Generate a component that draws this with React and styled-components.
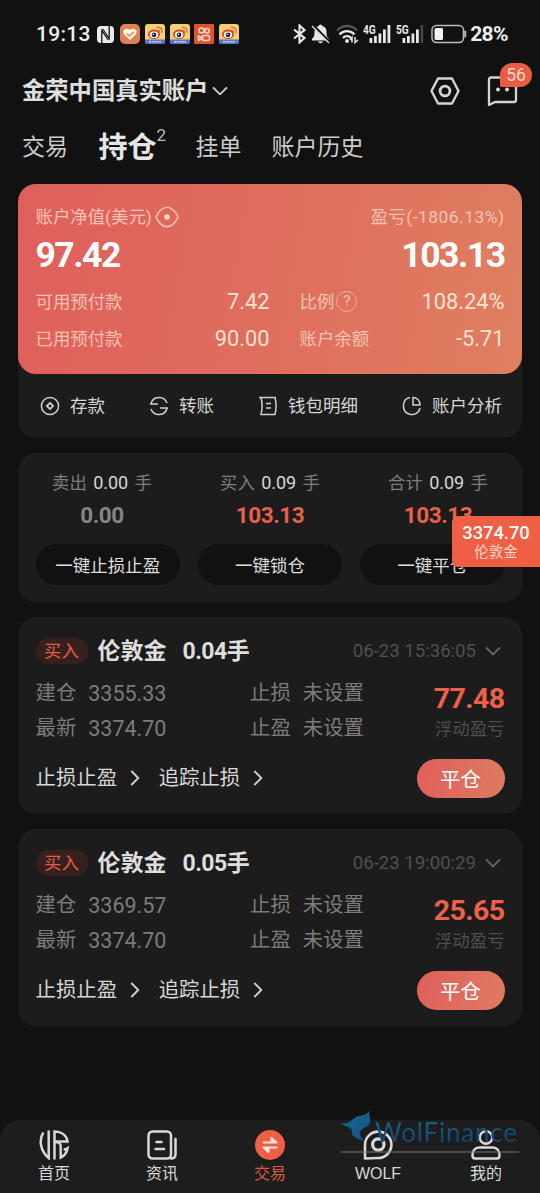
import React from "react";
import styled, { createGlobalStyle } from "styled-components";

const GlobalStyle = createGlobalStyle`
  body {
    margin: 0;
    background: #111111;
  }

  * {
    box-sizing: border-box;
  }

  svg {
    display: block;
    flex-shrink: 0;
  }
`;

const Screen = styled.div`
  position: relative;
  display: flex;
  flex-direction: column;
  width: 540px;
  height: 1193px;
  overflow: hidden;
  background: #111111;
  color: #dedede;
  font-family: Roboto, "Noto Sans CJK SC", sans-serif;
  white-space: nowrap;
`;

const StatusBar = styled.div`
  display: flex;
  align-items: center;
  height: 68px;
  padding: 0 32px 0 36px;
`;

const StatusText = styled.span`
  font-size: 21px;
  font-weight: ${(props) => props.$weight || 500};
  line-height: 24px;
  letter-spacing: ${(props) => props.$spacing || "0"};
  color: #eeeeee;
`;

const AppIcons = styled.div`
  display: flex;
  gap: 4.7px;
  margin-left: 6px;
`;

const SystemIcons = styled.div`
  display: flex;
  align-items: center;
  margin-left: auto;
`;

const Gap = styled.span`
  width: ${(props) => props.$w}px;
`;

const Header = styled.header`
  display: flex;
  align-items: center;
  height: 45px;
  padding: 0 22px;
`;

const AccountName = styled.h1`
  margin: 0 4px 0 0;
  font-size: 23.3px;
  font-weight: 700;
  line-height: 30px;
`;

const HeaderActions = styled.div`
  display: flex;
  align-items: center;
  gap: 27px;
  margin-left: auto;
`;

const MessageButton = styled.div`
  position: relative;
`;

const MessageBadge = styled.span`
  position: absolute;
  top: -13px;
  left: 13px;
  width: 32px;
  height: 24px;
  border-radius: 12px 12px 12px 2px;
  background: #ec5b42;
  color: #f7ddd4;
  font-size: 17.5px;
  line-height: 25px;
  text-align: center;
`;

const Tabs = styled.nav`
  display: flex;
  align-items: center;
  height: 71px;
  padding: 0 22px 1px;
`;

const Tab = styled.span`
  display: flex;
  margin-right: ${(props) => props.$gap}px;
  font-size: ${(props) => (props.$active ? "29px" : "23px")};
  font-weight: ${(props) => (props.$active ? 700 : 400)};
  line-height: 36px;
  color: ${(props) => (props.$active ? "#e6e6e6" : "#cccccc")};
`;

const TabCount = styled.sup`
  margin: -13px 0 0 0;
  font-size: 17px;
  font-weight: 400;
  line-height: 36px;
  color: #bbbbbb;
`;

const Content = styled.main`
  display: flex;
  flex-direction: column;
  gap: 15px;
  padding: 0 18px;
`;

const Card = styled.section`
  border-radius: 18px;
  background: #1c1c1c;
`;

const Balance = styled.div`
  height: 190px;
  padding: 21px 17.5px 0;
  border-radius: 18px;
  background: linear-gradient(100deg, #df5f5c 0%, #df6c5d 45%, #df7f60 100%);
`;

const Between = styled.div`
  display: flex;
  align-items: center;
  justify-content: space-between;
`;

const BalanceLabel = styled.span`
  display: flex;
  align-items: center;
  gap: 3px;
  font-size: 17.4px;
  line-height: 24px;
  letter-spacing: ${(props) => props.$spacing || "0"};
  color: #f5c3b4;
`;

const Total = styled.span`
  font-size: 35.5px;
  font-weight: 700;
  line-height: 52px;
  letter-spacing: -1.5px;
  color: #ffffff;
`;

const BalanceGrid = styled.div`
  display: grid;
  grid-template-columns: 234px 205px;
  column-gap: 30px;
  row-gap: 13px;
  margin-top: 8.5px;
`;

const BalanceValue = styled.span`
  font-size: 21.8px;
  line-height: 24px;
  color: #fbe3d4;
`;

const Actions = styled.div`
  display: flex;
  gap: 44px;
  height: 64px;
  padding: 0 0 0 22px;
  align-items: center;
`;

const Action = styled.span`
  display: flex;
  align-items: center;
  gap: 10px;
  font-size: 17.5px;
  line-height: 24px;
  color: #d5d5d5;
`;

const Summary = styled.div`
  height: 149px;
  padding-top: 17px;
`;

const SummaryFigures = styled.div`
  display: grid;
  grid-template-columns: repeat(3, 1fr);
  height: 74px;
`;

const SummaryColumn = styled.div`
  display: flex;
  flex-direction: column;
  align-items: center;
`;

const SummaryLots = styled.span`
  font-size: 17.4px;
  line-height: 26px;
  color: #7d7d7d;

  b {
    margin: 0 2px;
    font-size: 18px;
    font-weight: 400;
    color: #d6d6d6;
  }
`;

const SummaryProfit = styled.span`
  font-size: 22.5px;
  font-weight: 700;
  line-height: 39px;
  letter-spacing: -0.4px;
  color: ${(props) => (props.$flat ? "#858585" : "#e8604a")};
`;

const SummaryButtons = styled.div`
  display: grid;
  grid-template-columns: repeat(3, 1fr);
  column-gap: 17.5px;
  padding: 0 17.5px;
`;

const SummaryButton = styled.button`
  height: 41px;
  padding: 0 0 1px;
  border: none;
  border-radius: 21px;
  background: #111111;
  color: #dedede;
  font-family: inherit;
  font-size: 17.5px;
`;

const Position = styled(Card)`
  height: 197px;
  padding: 20.5px 17.5px 0;
`;

const PositionHead = styled.div`
  display: flex;
  align-items: center;
  height: 27px;
`;

const SideTag = styled.span`
  width: 52px;
  height: 26px;
  margin-right: 10px;
  border-radius: 13px;
  background: #36201d;
  color: #e75e4a;
  font-size: 17.4px;
  line-height: 26px;
  text-align: center;
`;

const PositionName = styled.span`
  margin-right: 16px;
  font-size: 23px;
  font-weight: 700;
  line-height: 27px;
  letter-spacing: ${(props) => props.$spacing || "0"};
`;

const PositionTime = styled.span`
  display: flex;
  align-items: center;
  gap: 9px;
  margin-left: auto;
  padding-right: 3.5px;
  font-size: 18.6px;
  line-height: 24px;
  color: #4f4f4f;
`;

const PositionBody = styled.div`
  display: grid;
  grid-template-columns: 214.5px 1fr auto;
  height: 71px;
  margin-top: 11px;
`;

const Field = styled.div`
  display: flex;
  gap: 12px;
  font-size: 20.4px;
  line-height: 35.5px;
  color: #7b7b7b;
`;

const FieldNumber = styled.span`
  font-size: 21.5px;
`;

const Floating = styled.div`
  display: flex;
  flex-direction: column;
  align-items: flex-end;
`;

const FloatingValue = styled.span`
  font-size: 28.5px;
  font-weight: 700;
  line-height: 45px;
  letter-spacing: -0.6px;
  color: #ee6049;
`;

const FloatingLabel = styled.span`
  font-size: 17.4px;
  line-height: 17px;
  color: #4f4f4f;
`;

const PositionFoot = styled.div`
  display: flex;
  align-items: center;
  height: 39px;
  margin-top: 12px;
`;

const FootLink = styled.span`
  display: flex;
  align-items: center;
  gap: 13px;
  margin-right: 19px;
  font-size: 20.4px;
  line-height: 28px;
  color: #d6d6d6;
`;

const CloseButton = styled.button`
  width: 88px;
  height: 39px;
  margin-left: auto;
  padding: 0 0 1px;
  border: none;
  border-radius: 20px;
  background: linear-gradient(100deg, #df5f5c, #df7b60);
  color: #ffffff;
  font-family: inherit;
  font-size: 20.4px;
`;

const PriceTag = styled.div`
  position: absolute;
  top: 515.5px;
  right: 0;
  width: 88px;
  height: 51px;
  padding-top: 5px;
  border-radius: 6px 0 0 6px;
  background: #ee5f46;
  color: #ffffff;
  font-size: 18.3px;
  font-weight: 500;
  line-height: 23px;
  text-align: center;
`;

const PriceTagName = styled.div`
  font-size: 14.5px;
  font-weight: 400;
  line-height: 18px;
  color: #fbd3c8;
`;

const BottomNav = styled.nav`
  display: grid;
  grid-template-columns: repeat(5, 1fr);
  height: 73.5px;
  margin-top: auto;
  padding-top: 10px;
  border-radius: 20px 20px 0 0;
  background: #1d1d1d;
`;

const NavItem = styled.div`
  display: flex;
  flex-direction: column;
  align-items: center;
  gap: 4.5px;
  font-family: "Liberation Sans", "Noto Sans CJK SC", sans-serif;
  font-size: 16px;
  line-height: 20px;
  color: ${(props) => (props.$active ? "#d95a46" : "#d8d8d8")};
`;

const Watermark = styled.div`
  position: absolute;
  left: 341px;
  top: 1110px;
  display: flex;
  width: 178px;
  height: 43px;
  border-bottom: 2px solid rgba(120, 120, 120, 0.5);
`;

const WatermarkText = styled.span`
  margin-left: 1px;
  font-family: Lato, sans-serif;
  font-size: 26px;
  line-height: 45px;
  letter-spacing: 0.8px;
  background: linear-gradient(#145f80 30%, #17406e 80%);
  background-clip: text;
  color: transparent;
`;

const Chevron = ({ size = 16, color = "#d0d0d0", right }) => (
  <svg width={right ? size * 0.6 : size} height={right ? size : size * 0.6} viewBox={right ? "0 0 9 16" : "0 0 16 9"} fill="none" stroke={color} strokeWidth="1.9">
    <path d={right ? "M1 1l7 7-7 7" : "M1 1l7 7 7-7"} />
  </svg>
);

const NfcIcon = () => (
  <svg width="17" height="19" viewBox="0 0 17 19">
    <rect y="1" width="17" height="17" rx="4" fill="#e9e9e9" />
    <path d="M4.800 19V5.500l6.500 9.500M12.200 0v13.500L5.700 4" fill="none" stroke="#111" strokeWidth="1.300" />
  </svg>
);

const HealthIcon = () => (
  <svg width="20" height="20" viewBox="0 0 20 20">
    <rect width="20" height="20" rx="5" fill="#dc8256" />
    <path d="M10 16L4.2 10.5C1.5 7 5.500 2.500 10 6c4.500-3.500 8.500 1 5.800 4.500z" fill="#fff4e8" />
    <path d="M7 9.500l2.700 2.500L13.500 8" fill="none" stroke="#dc8256" strokeWidth="1.400" />
  </svg>
);

const WeiboIcon = () => (
  <svg width="20" height="20" viewBox="0 0 20 20">
    <rect width="20" height="20" rx="3" fill="#f4cf73" />
    <path d="M0 15.500h20V17a3 3 0 0 1-3 3H3a3 3 0 0 1-3-3z" fill="#5b72c9" />
    <path d="M4 17.800h12" stroke="#c9d2f1" strokeWidth="1.500" strokeDasharray="2 .6" />
    <ellipse cx="9" cy="10.300" rx="6" ry="4.800" fill="#cf4a32" />
    <ellipse cx="9" cy="10.800" rx="4.200" ry="3.200" fill="#fff" />
    <circle cx="9" cy="10.800" r="2.400" fill="#222" />
    <circle cx="8.300" cy="10.300" r=".8" fill="#fff" />
    <path d="M12 6.500c2-.6 3 .8 2.500 2.500M12 3.500c4-.8 6 2 5 5.500" fill="none" stroke="#d8663c" strokeWidth="1.300" />
  </svg>
);

const KuaishouIcon = () => (
  <svg width="20" height="20" viewBox="0 0 20 20">
    <rect width="20" height="20" rx="1" fill="#e3522f" />
    <g fill="none" stroke="#fbd9cb" strokeWidth="1.600">
      <circle cx="7.500" cy="6.500" r="2.500" />
      <circle cx="13" cy="6.700" r="2.200" />
      <rect x="8.500" y="11.500" width="7" height="5" rx="1.500" />
      <path d="M4.500 12l3 1.200v1.800l-3 1.200z" />
    </g>
  </svg>
);

const BluetoothIcon = () => (
  <svg width="13" height="20" viewBox="0 0 13 20" fill="none" stroke="#e8e8e8" strokeWidth="2.100">
    <path d="M1 5.500l10.500 8.500-5 4.500V1.500l5 4.500L1 14.500" />
  </svg>
);

const BellOffIcon = () => (
  <svg width="19" height="20" viewBox="0 0 19 20">
    <path d="M9.500 .5c1 0 1.700.8 1.700 1.500 3 .8 4.300 2.500 4.300 5.500 0 4.500.5 5.500 2.500 7.500v1.500H1V15c2-2 2.500-3 2.500-7.500C3.500 4.500 5 2.800 7.800 2c0-.7.700-1.500 1.700-1.500zM7 17.500h5c-.5 2.300-4.500 2.300-5 0z" fill="#e8e8e8" />
    <path d="M2 1.500L18.500 18" stroke="#111" strokeWidth="3" />
    <path d="M1 2l17 17" stroke="#e8e8e8" strokeWidth="1.300" />
  </svg>
);

const WifiIcon = () => (
  <svg width="23" height="20" viewBox="0 0 23 20" fill="none" strokeWidth="2.300">
    <path d="M1 6.500C6.500.5 15.500.5 21 6.500" stroke="#555" />
    <path d="M3.500 10.500c4-4.500 11-4.500 15 0M7 14c2-2.500 6-2.500 8 0" stroke="#e8e8e8" />
    <circle cx="11" cy="17" r="1.900" fill="#e8e8e8" />
    <path d="M16 18.500v-5l-2 2.500M19 13v5.500l3-2.500" stroke="#e8e8e8" strokeWidth="1.500" />
  </svg>
);

const SignalIcon = ({ label, weak }) => (
  <svg width="30" height="28" viewBox="-1 -4 30 28">
    {[14, 12, 9.5, 5.5, 1].map((y, i) => (
      <rect key={y} x={6.5 + i * 4.5} y={y} width="2.800" height={19 - y} fill={weak && i === 4 ? "#444" : "#e8e8e8"} />
    ))}
    <text x="0" y="10" fill="#e8e8e8" fontSize="12" fontWeight="700" textLength="12.800" lengthAdjust="spacingAndGlyphs">{label}</text>
  </svg>
);

const BatteryIcon = () => (
  <svg width="36" height="20" viewBox="0 0 36 20">
    <rect x="1" y="1.500" width="31.500" height="17" rx="4.500" fill="none" stroke="#bcbcbc" strokeWidth="1.500" />
    <rect x="3.500" y="4" width="8.500" height="12" rx="1.500" fill="#f2f2f2" />
    <path d="M34.200 7.500v5" stroke="#bcbcbc" strokeWidth="2" strokeLinecap="round" />
  </svg>
);

const SettingsIcon = () => (
  <svg width="30" height="30" viewBox="0 0 30 30" fill="none" stroke="#d4d4d4" strokeWidth="2.400" strokeLinejoin="round">
    <path d="M8 2.500h14L28.500 15 22 27.500H8L1.500 15z" />
    <circle cx="15" cy="15" r="4.900" strokeWidth="2.800" />
  </svg>
);

const MessageIcon = () => (
  <svg width="31" height="30" viewBox="0 0 31 30" fill="none" stroke="#d4d4d4" strokeWidth="2.300" strokeLinejoin="round">
    <path d="M4 1.500h23a2 2 0 0 1 2 2V24a2 2 0 0 1-2 2H8l-6 3V3.500a2 2 0 0 1 2-2z" />
    <g fill="#d4d4d4" stroke="none">
      <circle cx="11" cy="13.500" r="2" />
      <circle cx="20" cy="13.500" r="2" />
    </g>
  </svg>
);

const EyeIcon = () => (
  <svg width="24" height="22" viewBox="0 0 24 22" fill="none" stroke="#f4bfb0" strokeWidth="1.600">
    <path d="M1 11C2.500 7 7 1.200 12 1.200S21.500 7 23 11C21.500 15 17 20.800 12 20.800S2.500 15 1 11z" strokeLinejoin="round" />
    <circle cx="12" cy="11" r="2.800" fill="#f8d9cf" stroke="none" />
  </svg>
);

const HelpMark = styled.span`
  width: 21px;
  height: 21px;
  margin-left: -1px;
  border: 1.5px solid #f0b29b;
  border-radius: 50%;
  font-size: 15.5px;
  line-height: 19px;
  text-align: center;
`;

const lineIcon = {
  width: 20,
  height: 20,
  viewBox: "0 0 20 20",
  fill: "none",
  stroke: "#cfcfcf",
  strokeWidth: 1.5,
};

const DepositIcon = () => (
  <svg {...lineIcon}>
    <circle cx="10" cy="10" r="8.600" />
    <path d="M10 6.900l3.100 3.100-3.100 3.100L6.900 10z" strokeWidth="1.800" />
  </svg>
);

const TransferIcon = () => (
  <svg {...lineIcon}>
    <path d="M1 8h8M2 8C3.500-.2 15-1 18 7M19 12h-8M18 12c-1.500 8.200-13 9-16 1" />
  </svg>
);

const WalletIcon = () => (
  <svg {...lineIcon}>
    <path d="M1 1.500h17M3 1.500c1.500 6 1.500 11 0 17h14c1.500-6 1.500-11 0-17M8 7.500h5M8 12H13" />
  </svg>
);

const PieIcon = () => (
  <svg {...lineIcon}>
    <path d="M8 1.500C-.5 3-.8 16 7.500 18.300c5 1.200 9.500-1.800 10.700-6.300M11 1.500V9h7c0-4.500-3-7.500-7-7.500z" />
  </svg>
);

const HomeIcon = () => (
  <svg width="30" height="30" viewBox="0 0 30 30" fill="none" stroke="#d8d8d8" strokeWidth="2.500">
    <path d="M4.300 2.500C-.5 10 1.500 21 9.700 28V.5M15.500 29.500V1.600C22 1.600 27.500 5 28.500 11.500H16" />
    <path d="M16 12c5 0 5.700 2 5.700 5v10.500C25 26 27.800 22.500 28.600 18.200c-1.500 1-2.600 1.300-4 1.300" />
  </svg>
);

const NewsIcon = () => (
  <svg width="30" height="30" viewBox="0 0 30 30" fill="none" stroke="#d8d8d8" strokeWidth="2.500">
    <rect x="1.500" y="1.500" width="22.500" height="27" rx="4" />
    <path d="M24 28.500c3 0 4.500-1.500 4.500-4.500V9M9.500 12h5M8.500 19h8.500" strokeLinecap="round" />
  </svg>
);

const TradeIcon = () => (
  <svg width="30" height="30" viewBox="0 0 30 30">
    <circle cx="15" cy="15" r="15" fill="#ee5f46" />
    <path d="M8.500 12.500h13l-5-4.500v4M21.500 17.500h-13l5 4.500v-4" fill="#fbe3dc" stroke="#fbe3dc" strokeWidth="2" strokeLinecap="round" strokeLinejoin="round" />
  </svg>
);

const WolfIcon = () => (
  <svg width="30" height="30" viewBox="0 0 30 30" fill="none" stroke="#d8d8d8" strokeWidth="2.600">
    <path d="M2 28.500V15A13.200 13.200 0 1 1 15 28z" strokeLinejoin="round" />
    <circle cx="15.300" cy="14.500" r="5.700" strokeWidth="3.200" />
  </svg>
);

const ProfileIcon = () => (
  <svg width="30" height="30" viewBox="0 0 30 30" fill="none" stroke="#d8d8d8" strokeWidth="2.500">
    <circle cx="15" cy="7.500" r="6.300" />
    <path d="M8 17.500h14c4 0 6.500 3.500 6.500 8 0 2-1 3-2.500 3H4c-1.500 0-2.500-1-2.500-3 0-4.500 2.500-8 6.500-8z" />
  </svg>
);

const WolfLogo = () => (
  <svg width="33" height="34" viewBox="0 0 33 34">
    <defs>
      <linearGradient id="wolf" x1="0" y1="0" x2="1" y2="1">
        <stop offset="0" stopColor="#16708d" />
        <stop offset="1" stopColor="#164b86" />
      </linearGradient>
    </defs>
    <path d="M0 13c4 1 8 0 11-3 5-5 10-4 14-6l3-3 1 8c1 4-1 7-6 9-6 3-5 8 1 13-9-1-15-6-13-12l-4-1 3-1c-5 0-8-2-10-4z" fill="url(#wolf)" />
  </svg>
);

const actions = [
  { label: "存款", Icon: DepositIcon },
  { label: "转账", Icon: TransferIcon },
  { label: "钱包明细", Icon: WalletIcon },
  { label: "账户分析", Icon: PieIcon },
];

const summary = [
  { label: "卖出", lots: "0.00", profit: "0.00", flat: true },
  { label: "买入", lots: "0.09", profit: "103.13" },
  { label: "合计", lots: "0.09", profit: "103.13" },
];

const summaryButtons = ["一键止损止盈", "一键锁仓", "一键平仓"];

const positions = [
  { lots: "0.04", time: "06-23 15:36:05", open: "3355.33", last: "3374.70", profit: "77.48" },
  { lots: "0.05", time: "06-23 19:00:29", open: "3369.57", last: "3374.70", profit: "25.65" },
];

const navItems = [
  { label: "首页", Icon: HomeIcon },
  { label: "资讯", Icon: NewsIcon },
  { label: "交易", Icon: TradeIcon, active: true },
  { label: "WOLF", Icon: WolfIcon },
  { label: "我的", Icon: ProfileIcon },
];

const PositionCard = ({ position }) => (
  <Position>
    <PositionHead>
      <SideTag>买入</SideTag>
      <PositionName>伦敦金</PositionName>
      <PositionName $spacing="-0.5px">{position.lots}手</PositionName>
      <PositionTime>
        {position.time}
        <Chevron size={16} color="#666666" />
      </PositionTime>
    </PositionHead>
    <PositionBody>
      <div>
        <Field>建仓 <FieldNumber>{position.open}</FieldNumber></Field>
        <Field>最新 <FieldNumber>{position.last}</FieldNumber></Field>
      </div>
      <div>
        <Field>止损 <span>未设置</span></Field>
        <Field>止盈 <span>未设置</span></Field>
      </div>
      <Floating>
        <FloatingValue>{position.profit}</FloatingValue>
        <FloatingLabel>浮动盈亏</FloatingLabel>
      </Floating>
    </PositionBody>
    <PositionFoot>
      <FootLink>止损止盈 <Chevron right size={16} /></FootLink>
      <FootLink>追踪止损 <Chevron right size={16} /></FootLink>
      <CloseButton>平仓</CloseButton>
    </PositionFoot>
  </Position>
);

const App = () => {
  return (
    <Screen>
      <GlobalStyle />
      <StatusBar>
        <StatusText $spacing="0.3px">19:13</StatusText>
        <Gap $w={6.5} />
        <NfcIcon />
        <AppIcons>
          <HealthIcon />
          <WeiboIcon />
          <WeiboIcon />
          <KuaishouIcon />
          <WeiboIcon />
        </AppIcons>
        <SystemIcons>
          <BluetoothIcon />
          <Gap $w={5} />
          <BellOffIcon />
          <Gap $w={6} />
          <WifiIcon />
          <Gap $w={3} />
          <SignalIcon label="4G" />
          <Gap $w={3} />
          <SignalIcon label="5G" weak />
          <Gap $w={6} />
          <BatteryIcon />
          <Gap $w={3} />
          <StatusText $weight={700} $spacing="-0.6px">28%</StatusText>
        </SystemIcons>
      </StatusBar>

      <Header>
        <AccountName>金荣中国真实账户</AccountName>
        <Chevron size={16} />
        <HeaderActions>
          <SettingsIcon />
          <MessageButton>
            <MessageIcon />
            <MessageBadge>56</MessageBadge>
          </MessageButton>
        </HeaderActions>
      </Header>

      <Tabs>
        <Tab $gap={30.5}>交易</Tab>
        <Tab $active $gap={29.5}>
          持仓<TabCount>2</TabCount>
        </Tab>
        <Tab $gap={30}>挂单</Tab>
        <Tab $gap={0}>账户历史</Tab>
      </Tabs>

      <Content>
        <Card>
          <Balance>
            <Between>
              <BalanceLabel>账户净值(美元)<EyeIcon /></BalanceLabel>
              <BalanceLabel $spacing="0.5px">盈亏(-1806.13%)</BalanceLabel>
            </Between>
            <Between>
              <Total>97.42</Total>
              <Total>103.13</Total>
            </Between>
            <BalanceGrid>
              <Between>
                <BalanceLabel>可用预付款</BalanceLabel>
                <BalanceValue>7.42</BalanceValue>
              </Between>
              <Between>
                <BalanceLabel>比例<HelpMark>?</HelpMark></BalanceLabel>
                <BalanceValue>108.24%</BalanceValue>
              </Between>
              <Between>
                <BalanceLabel>已用预付款</BalanceLabel>
                <BalanceValue>90.00</BalanceValue>
              </Between>
              <Between>
                <BalanceLabel>账户余额</BalanceLabel>
                <BalanceValue>-5.71</BalanceValue>
              </Between>
            </BalanceGrid>
          </Balance>
          <Actions>
            {actions.map(({ label, Icon }) => (
              <Action key={label}>
                <Icon />
                {label}
              </Action>
            ))}
          </Actions>
        </Card>

        <Card>
          <Summary>
            <SummaryFigures>
              {summary.map((item) => (
                <SummaryColumn key={item.label}>
                  <SummaryLots>
                    {item.label} <b>{item.lots}</b> 手
                  </SummaryLots>
                  <SummaryProfit $flat={item.flat}>{item.profit}</SummaryProfit>
                </SummaryColumn>
              ))}
            </SummaryFigures>
            <SummaryButtons>
              {summaryButtons.map((label) => (
                <SummaryButton key={label}>{label}</SummaryButton>
              ))}
            </SummaryButtons>
          </Summary>
        </Card>

        {positions.map((position) => (
          <PositionCard key={position.time} position={position} />
        ))}
      </Content>

      <PriceTag>
        3374.70
        <PriceTagName>伦敦金</PriceTagName>
      </PriceTag>

      <BottomNav>
        {navItems.map(({ label, Icon, active }) => (
          <NavItem key={label} $active={active}>
            <Icon />
            {label}
          </NavItem>
        ))}
      </BottomNav>

      <Watermark>
        <WolfLogo />
        <WatermarkText>WolFinance</WatermarkText>
      </Watermark>
    </Screen>
  );
};

export default App;
